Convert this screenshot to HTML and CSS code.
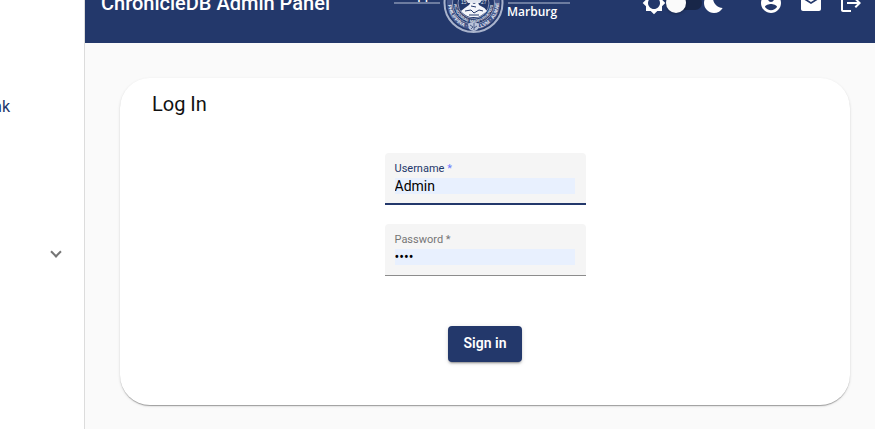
FILE: index.html
```html
<!DOCTYPE html>
<html lang="en">
<head>
<meta charset="utf-8">
<title>ChronicleDB Admin Panel</title>
<link rel="stylesheet" href="styles.css">
</head>
<body>
<div class="app">
  <nav class="sidebar">
    <a class="nav-link" href="#">nk</a>
    <button class="nav-toggle" type="button" aria-label="Expand"><span class="chevron"></span></button>
  </nav>
  <div class="page">
    <header class="toolbar">
      <h1 class="brand">ChronicleDB Admin Panel</h1>
      <svg class="logo" viewBox="0 0 180 80" role="img" aria-label="Philipps Universität Marburg">
        <defs>
          <path id="arc-outer" d="M58 40A25.500 25.500 0 0 0 109 40"/>
          <path id="arc-inner" d="M64 40A19.500 19.500 0 0 0 103 40"/>
        </defs>
        <path d="M4 40H50M118 40H180" stroke="#8793b3" stroke-width="1.500"/>
        <text class="logo-name" x="48" y="36" text-anchor="end">Philipps</text>
        <text class="logo-name" x="117" y="53">Marburg</text>
        <circle cx="83.500" cy="40" r="29" fill="none" stroke="#a9b3cc" stroke-width="2"/>
        <circle cx="83.500" cy="40" r="24" fill="none" stroke="#44568a" stroke-width="5"/>
        <text class="seal-text"><textPath href="#arc-outer" startOffset="2">PHILIPPINA · SIGILLVM · ALMAE · VN</textPath></text>
        <circle cx="83.500" cy="40" r="21" fill="none" stroke="#8e9aba" stroke-width="1"/>
        <text class="seal-text seal-small"><textPath href="#arc-inner" startOffset="1">ACADEMIAE MARPVRGENSIS</textPath></text>
        <circle cx="83.500" cy="40" r="15.500" fill="none" stroke="#8793b3" stroke-width="1"/>
        <path d="M76 37q8-8 16 0l-2 3h-12z" fill="#dfe4ee"/>
        <path d="M71 48q5-4 8-6l2-3 3 2 4-2 1 3q5 2 8 6-6 5-9 6h-8q-6-2-9-6z" fill="#f3f5fa"/>
        <path d="M75 48l6-1 3 3 5-3 4 1M81 43l5 1M79 52h10" fill="none" stroke="#23386b" stroke-width="1"/>
        <text class="seal-year" x="71" y="41">15</text>
        <text class="seal-year" x="91" y="41">27</text>
        <path d="M78 61q5-4 11 0l-1 5q-4 4-9 0z" fill="#bac4da"/>
        <path d="M80 62l3 2-2 2M84 60v7M87 63l-3 2" fill="none" stroke="#23386b" stroke-width=".7"/>
      </svg>
      <div class="actions">
        <svg class="icon" viewBox="0 0 24 24" aria-hidden="true"><path d="M20 15.310L23.310 12 20 8.690V4h-4.690L12 .69 8.690 4H4v4.690L.69 12 4 15.310V20h4.690L12 23.310 15.310 20H20v-4.690zM12 18c-3.310 0-6-2.690-6-6s2.690-6 6-6 6 2.690 6 6-2.690 6-6 6z"/></svg>
        <input class="switch" type="checkbox" role="switch" aria-label="Dark mode">
        <svg class="icon" viewBox="0 0 24 24" aria-hidden="true"><path d="M12.340 2.020C6.590 1.820 2 6.420 2 12c0 5.520 4.480 10 10 10 3.710 0 6.930-2.020 8.660-5.020-7.510-.25-12.090-8.430-8.320-14.960z"/></svg>
        <div class="buttons">
          <button class="icon-button" type="button" aria-label="Account"><svg class="icon" viewBox="0 0 24 24"><path d="M12 2C6.480 2 2 6.480 2 12s4.480 10 10 10 10-4.480 10-10S17.520 2 12 2zm0 3c1.660 0 3 1.340 3 3s-1.340 3-3 3-3-1.340-3-3 1.340-3 3-3zm0 14.200c-2.500 0-4.710-1.280-6-3.220.03-1.990 4-3.080 6-3.080 1.990 0 5.970 1.090 6 3.080-1.290 1.940-3.500 3.220-6 3.220z"/></svg></button>
          <button class="icon-button" type="button" aria-label="Mail"><svg class="icon" viewBox="0 0 24 24"><path d="M20 4H4c-1.100 0-1.990.9-1.990 2L2 18c0 1.100.9 2 2 2h16c1.100 0 2-.9 2-2V6c0-1.100-.9-2-2-2zm0 4l-8 5-8-5V6l8 5 8-5v2z"/></svg></button>
          <button class="icon-button" type="button" aria-label="Log out"><svg class="icon" viewBox="0 0 24 24"><path d="M17 7l-1.410 1.410L18.170 11H8v2h10.170l-2.580 2.580L17 17l5-5zM4 5h8V3H4c-1.100 0-2 .9-2 2v14c0 1.100.9 2 2 2h8v-2H4V5z"/></svg></button>
        </div>
      </div>
    </header>
    <main class="content">
      <section class="card">
        <h2 class="card-title">Log In</h2>
        <form class="form">
          <div class="field focused">
            <label for="username">Username <span class="required">*</span></label>
            <input id="username" type="text" value="Admin">
          </div>
          <div class="field">
            <label for="password">Password <span class="required">*</span></label>
            <input id="password" type="password" value="pass">
          </div>
          <button class="submit" type="button">Sign in</button>
        </form>
      </section>
    </main>
  </div>
</div>
</body>
</html>
```
FILE: styles.css
```css
:root {
  --navy: #23386b;
}

* {
  box-sizing: border-box;
}

body {
  margin: 0;
  font-family: Roboto, "Liberation Sans", sans-serif;
  font-size: 14px;
  background: #fafafa;
  overflow: hidden;
}

.app {
  display: flex;
  min-height: 100vh;
}

.sidebar {
  display: flex;
  flex-direction: column;
  align-items: flex-end;
  flex: 0 0 85px;
  gap: 117px;
  padding-top: 83px;
  border-right: 1px solid #dcdcdc;
  background: #fff;
  overflow: hidden;
}

.nav-link {
  align-self: flex-start;
  width: 10px;
  direction: rtl;
  font-size: 16px;
  line-height: 48px;
  color: var(--navy);
  text-decoration: none;
}

.nav-toggle {
  display: flex;
  justify-content: center;
  width: 24px;
  margin-right: 16px;
  padding: 0;
  border: 0;
  background: none;
}

.chevron {
  width: 8px;
  height: 8px;
  border: solid #757575;
  border-width: 0 2px 2px 0;
  transform: rotate(45deg);
}

.page {
  flex: 1;
  min-width: 0;
}

.toolbar {
  display: grid;
  grid-template-columns: minmax(0, 1fr) auto minmax(0, 1fr);
  align-items: center;
  height: 80px;
  margin-top: -37px;
  padding: 0 4px;
  background: var(--navy);
  color: #fff;
}

.brand {
  margin: 0;
  padding-left: 12px;
  font-size: 20px;
  font-weight: 500;
  line-height: 24px;
  white-space: nowrap;
}

.logo {
  display: block;
  width: 180px;
  height: 80px;
}

.logo-name {
  font-family: "Open Sans", "Noto Sans", sans-serif;
  font-size: 12px;
  font-weight: 600;
  fill: #fff;
}

.seal-text {
  font-family: "Liberation Sans", sans-serif;
  font-size: 5px;
  font-weight: 700;
  fill: #e4e8f1;
}

.seal-small {
  font-size: 4px;
}

.seal-year {
  font-family: "Liberation Sans", sans-serif;
  font-size: 5px;
  fill: #dfe4ee;
}

.actions {
  display: flex;
  justify-content: flex-end;
  align-items: center;
}

.icon {
  display: block;
  flex: none;
  width: 24px;
  height: 24px;
  fill: #fff;
}

.switch {
  appearance: none;
  display: flex;
  align-items: center;
  width: 36px;
  height: 14px;
  margin: 0;
  border-radius: 7px;
  background: #182648;
}

.switch::before {
  content: "";
  flex: none;
  width: 20px;
  height: 20px;
  border-radius: 50%;
  background: #fafafa;
  box-shadow: 0 1px 3px rgba(0, 0, 0, .3);
}

.buttons {
  display: flex;
  margin-left: 25px;
}

.icon-button {
  width: 40px;
  height: 40px;
  padding: 8px;
  border: 0;
  background: none;
}

.content {
  padding: 35px 25px 24px 35px;
}

.card {
  padding: 14px 32px 43px;
  border-radius: 30px;
  background: #fff;
  box-shadow: 0 2px 1px -1px rgba(0, 0, 0, .2), 0 1px 1px rgba(0, 0, 0, .14), 0 1px 3px rgba(0, 0, 0, .12);
}

.card-title {
  margin: 0 0 37px;
  font-size: 20px;
  font-weight: 400;
  line-height: 24px;
  color: #111;
}

.form {
  display: flex;
  flex-direction: column;
  align-items: center;
}

.field {
  display: flex;
  flex-direction: column;
  width: 201px;
  height: 52px;
  margin-bottom: 19px;
  padding: 10px 11px 0 10px;
  border-bottom: 1px solid #8c8c8c;
  border-radius: 4px 4px 0 0;
  background: #f5f5f5;
}

.field label {
  font-size: 11px;
  line-height: 12px;
  color: #757575;
}

.field input {
  width: 100%;
  height: 16px;
  margin-top: 3px;
  padding: 0;
  border: 0;
  outline: 0;
  font: inherit;
  color: #000;
  background: #e8f0fe;
}

.focused {
  border-bottom: 2px solid var(--navy);
}

.focused label {
  color: var(--navy);
}

.focused .required {
  color: #6f7cff;
}

.submit {
  height: 36px;
  margin-top: 31px;
  padding: 0 16px 2px;
  border: 0;
  border-radius: 4px;
  background: var(--navy);
  box-shadow: 0 3px 1px -2px rgba(0, 0, 0, .2), 0 2px 2px rgba(0, 0, 0, .14), 0 1px 5px rgba(0, 0, 0, .12);
  font: 600 14px/34px Roboto, sans-serif;
  color: #fff;
}
```
